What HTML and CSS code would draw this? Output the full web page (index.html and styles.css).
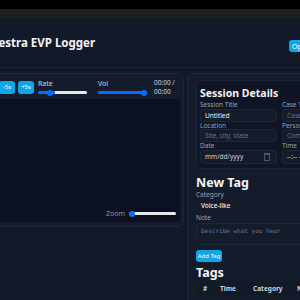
FILE: index.html
```html
<!DOCTYPE html>
<html lang="en">
<head>
    <meta charset="UTF-8">
    <title>Orchestra EVP Logger</title>
    <link rel="stylesheet" href="styles.css">
</head>
<body>
    <div class="chrome-top"></div>
    <div class="chrome-tab"></div>
    <div class="app">
        <header class="app-header">
            <h1 class="app-title">Orchestra EVP Logger</h1>
            <div class="header-actions">
                <button class="btn btn-primary">Open Audio</button>
            </div>
        </header>

        <main class="app-main">
            <section class="card player">
                <div class="controls">
                    <button class="btn btn-primary btn-sm">Play</button>
                    <button class="btn btn-primary btn-sm">Stop</button>
                    <button class="btn btn-primary btn-sm">-5s</button>
                    <button class="btn btn-primary btn-sm">+5s</button>
                    <label class="ctl ctl-rate">
                        <span class="ctl-label">Rate</span>
                        <input type="range" class="range" min="0.5" max="2" step="0.1" value="0.8" style="--p: 35%;">
                    </label>
                    <label class="ctl ctl-vol">
                        <span class="ctl-label">Vol</span>
                        <input type="range" class="range" min="0" max="1" step="0.01" value="1" style="--p: 100%;">
                    </label>
                    <div class="time">00:00 / 00:00</div>
                </div>
                <div class="waveform">
                    <label class="zoom">
                        <span class="ctl-label">Zoom</span>
                        <input type="range" class="range range-zoom" min="1" max="100" value="1" style="--p: 0%;">
                    </label>
                </div>
            </section>

            <aside class="card side">
                <div class="session">
                    <h2 class="session-title">Session Details</h2>
                    <div class="field-grid">
                        <div class="field">
                            <span class="field-label">Session Title</span>
                            <input class="input" type="text" value="Untitled">
                        </div>
                        <div class="field">
                            <span class="field-label">Case Title</span>
                            <input class="input" type="text" placeholder="Case or investigation">
                        </div>
                        <div class="field">
                            <span class="field-label">Location</span>
                            <input class="input" type="text" placeholder="Site, city, state">
                        </div>
                        <div class="field">
                            <span class="field-label">Persons Present</span>
                            <input class="input" type="text" placeholder="Comma separated">
                        </div>
                        <div class="field">
                            <span class="field-label">Date</span>
                            <div class="input input-date"><span>mm/dd/yyyy</span><span class="cal"></span></div>
                        </div>
                        <div class="field">
                            <span class="field-label">Time</span>
                            <div class="input input-date"><span>--:-- --</span></div>
                        </div>
                    </div>
                </div>

                <h2 class="section-title section-new">New Tag</h2>
                <div class="field tag-field">
                    <span class="field-label">Category</span>
                    <div class="input select">Voice-like</div>
                </div>
                <div class="field tag-field tag-note">
                    <span class="field-label">Note</span>
                    <textarea class="input textarea" placeholder="Describe what you hear"></textarea>
                </div>
                <button class="btn btn-primary btn-add">Add Tag</button>

                <h2 class="section-title section-tags">Tags</h2>
                <table class="tags">
                    <thead>
                        <tr><th class="c-num">#</th><th class="c-time">Time</th><th class="c-cat">Category</th><th>Note</th></tr>
                    </thead>
                </table>
            </aside>
        </main>
    </div>
</body>
</html>
```

FILE: styles.css
```css
html, body {
    margin: 0;
    padding: 0;
    height: 100%;
}

body {
    background: #111827;
    color: #e5e7eb;
    font-family: "Noto Sans", "Open Sans", sans-serif;
    overflow: hidden;
}

.chrome-top {
    height: 9px;
    background: #000;
}

.chrome-tab {
    height: 9px;
    background: #1f1f1f;
}

.app {
    width: 440px;
    margin-left: -60px;
}

.app-header {
    height: 50px;
    display: flex;
    align-items: center;
    justify-content: space-between;
    padding: 0 31px 0 31px;
    background: #121a29;
    border-bottom: 1px solid #1c2433;
    box-sizing: border-box;
}

.app-title {
    margin: 0;
    font-size: 11.5px;
    font-weight: 700;
    color: #f3f4f6;
}

.btn {
    border: none;
    outline: none;
    margin: 0;
    font-family: inherit;
    cursor: pointer;
}

.btn-primary {
    background: #0ea5e9;
    color: #fff;
    border-radius: 3px;
    font-size: 7px;
    padding: 0 5px;
    height: 12px;
}

.header-actions .btn-primary {
    height: 12px;
    width: 60px;
    padding: 0 3px;
    text-align: left;
}

.app-main {
    display: flex;
    align-items: flex-start;
    gap: 3px;
    padding: 5px 0 0 12px;
}

.card {
    background: #141b2b;
    border: 1px solid #1f2838;
    border-radius: 6px;
    box-sizing: border-box;
}

.player {
    width: 233px;
    padding: 5px 3px 4px 3px;
}

.controls {
    display: flex;
    align-items: center;
    gap: 3px;
    height: 16px;
}

.btn-sm {
    height: 13px;
    padding: 0;
    width: 16px;
    font-size: 6px;
}

.controls .btn-sm:first-child {
    width: 21px;
}

.ctl {
    display: flex;
    flex-direction: column;
    font-size: 7px;
    color: #cbd5e1;
    line-height: 8px;
}

.ctl-rate {
    margin-left: 1px;
}

.ctl-vol {
    margin-left: 8px;
}

.ctl-label {
    color: #cbd5e1;
    font-size: 7px;
}

.range {
    -webkit-appearance: none;
    appearance: none;
    width: 49px;
    height: 3px;
    margin: 3px 0 0 0;
    border-radius: 2px;
    background: linear-gradient(to right, #0a6cff var(--p), #e8e8e8 var(--p));
    outline: none;
}

.range::-webkit-slider-thumb {
    -webkit-appearance: none;
    width: 6px;
    height: 6px;
    border-radius: 50%;
    background: #0a6cff;
}

.time {
    width: 26px;
    margin-left: 4px;
    font-size: 6.5px;
    line-height: 9px;
    color: #cbd5e1;
}

.waveform {
    margin-top: 4px;
    height: 123px;
    background: #0b1120;
    border-radius: 3px;
    display: flex;
    align-items: flex-end;
    justify-content: flex-end;
    padding: 0 4px 4px 0;
    box-sizing: border-box;
}

.zoom {
    display: flex;
    align-items: center;
    gap: 4px;
}

.zoom .ctl-label {
    color: #8b95a5;
}

.range-zoom {
    width: 47px;
    margin: 0;
}

.side {
    width: 230px;
    height: 240px;
    padding: 6px 8px;
}

.session {
    background: #0f1524;
    border: 1px solid #1c2535;
    border-radius: 5px;
    padding: 5px 3px 4px 3px;
}

.session-title {
    margin: 0 0 1px 0;
    font-size: 10.5px;
    line-height: 14px;
    font-weight: 700;
    color: #f3f4f6;
}

.field-grid {
    display: grid;
    grid-template-columns: 77px 77px;
    column-gap: 5px;
    row-gap: 0;
}

.field {
    display: flex;
    flex-direction: column;
}

.field-label {
    font-size: 6.5px;
    line-height: 7.5px;
    color: #9aa3b2;
}

.input {
    box-sizing: border-box;
    height: 13px;
    background: #141c2c;
    border: 1px solid #1e2737;
    border-radius: 3px;
    color: #f3f4f6;
    font-family: inherit;
    font-size: 6.5px;
    padding: 0 4px;
    outline: none;
}

.input::placeholder {
    color: #6b7585;
}

.input-date {
    display: flex;
    align-items: center;
    justify-content: space-between;
    color: #d1d5db;
    height: 14px;
}

.cal {
    width: 4px;
    height: 5px;
    border: 1px solid #4b5565;
    border-top-width: 2px;
    margin-right: 2px;
}

.section-title {
    margin: 0;
    font-size: 12.5px;
    font-weight: 700;
    line-height: 15px;
    color: #f3f4f6;
}

.section-new {
    margin-top: 6px;
}

.section-tags {
    margin-top: 3px;
}

.tag-field .field-label {
    line-height: 9px;
    margin-bottom: 0.5px;
}

.tag-note {
    margin-top: 2px;
}

.select {
    display: flex;
    align-items: center;
    height: 12px;
    border-color: #141c2c;
    background: #131a2a;
    font-weight: 500;
}

.textarea {
    height: 22px;
    resize: none;
    padding: 3px 4px;
    font-family: "DejaVu Sans Mono", monospace;
    font-size: 6px;
}

.btn-add {
    display: block;
    margin-top: 5px;
    height: 12px;
    width: 26px;
    padding: 0;
    font-size: 6px;
}

.tags {
    margin-top: 2px;
    border-collapse: collapse;
    width: 100%;
}

.tags th {
    font-size: 6.5px;
    font-weight: 700;
    color: #d1d5db;
    text-align: left;
    padding: 2px 0;
    background: #121a28;
    height: 12px;
    box-sizing: border-box;
}

.tags .c-num {
    width: 24px;
    padding-left: 7px;
}

.tags .c-time {
    width: 33px;
}

.tags .c-cat {
    width: 44px;
}
```
